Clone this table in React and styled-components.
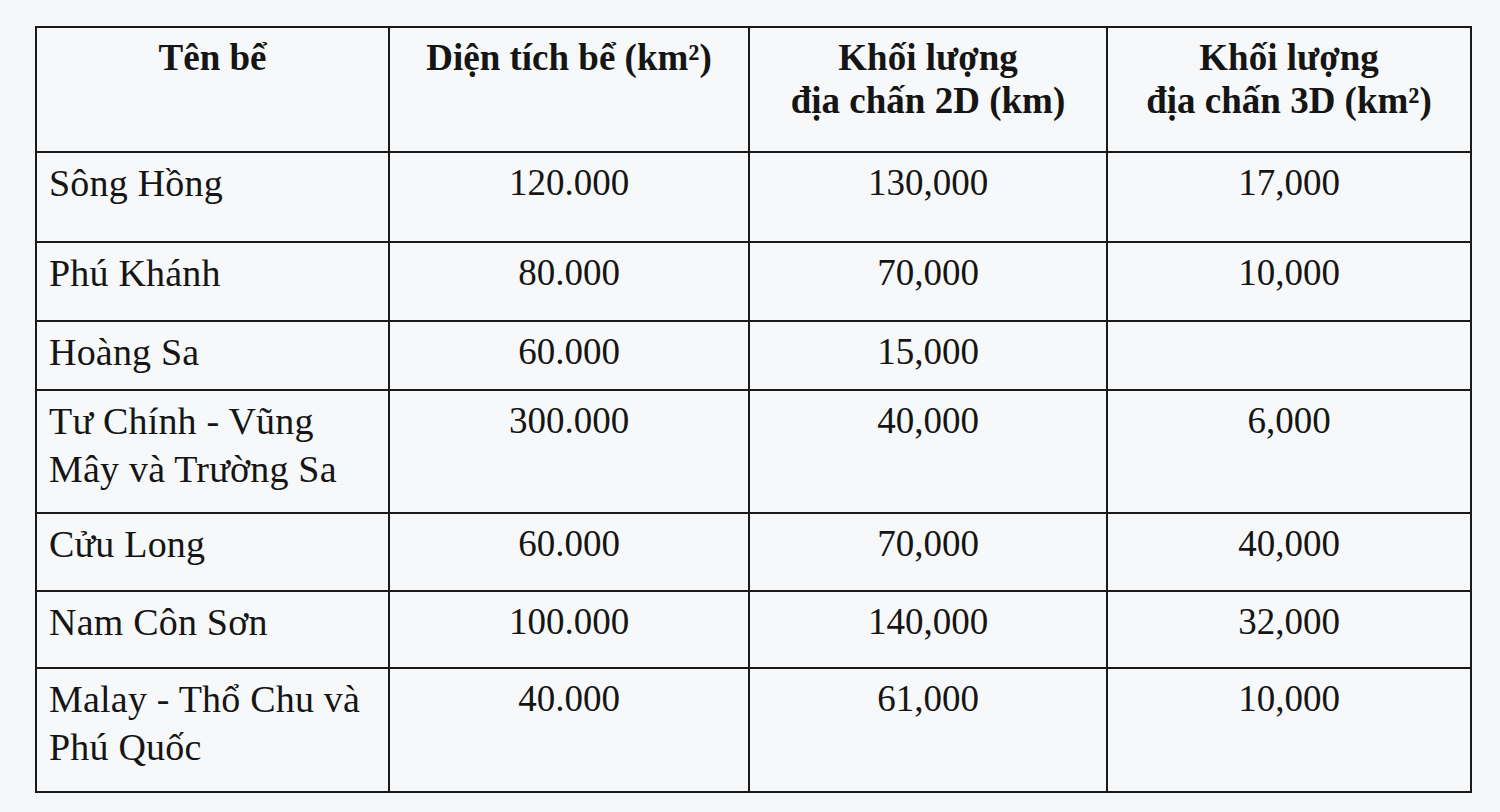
import React from "react";
import styled, { createGlobalStyle } from "styled-components";

const Global = createGlobalStyle`
  html, body {
    margin: 0;
    padding: 0;
    background: #f4f6f7;
  }
  body {
    width: 1500px;
    height: 812px;
    overflow: hidden;
  }
`;

const Page = styled.div`
  padding: 26px 30px 0 35px;
`;

const Table = styled.table`
  border-collapse: collapse;
  width: 1435px;
  table-layout: fixed;
  font-family: "Liberation Serif", "Times New Roman", serif;
  color: #151515;
  background: #f6f8f9;
  border: 2px solid #1a1a1a;
`;

const Col = styled.col`
  width: ${(p) => p.$w}px;
`;

const Row = styled.tr`
  height: ${(p) => p.$h}px;
`;

const Head = styled.th`
  border: 2px solid #1a1a1a;
  font-weight: 700;
  font-size: 37px;
  line-height: 43px;
  text-align: center;
  vertical-align: top;
  padding: 8px 8px 0;
`;

const Cell = styled.td`
  border: 2px solid #1a1a1a;
  font-size: ${(p) => (p.$num ? 37 : 38)}px;
  line-height: 48px;
  text-align: ${(p) => (p.$left ? "left" : "center")};
  vertical-align: top;
  padding: 6px ${(p) => (p.$left ? "10px 0 12px" : "8px 0")};
  letter-spacing: ${(p) => (p.$left ? "0.2px" : "0")};
`;

const rows = [
  { name: "Sông Hồng", a: "120.000", b: "130,000", c: "17,000", h: 90 },
  { name: "Phú Khánh", a: "80.000", b: "70,000", c: "10,000", h: 79 },
  { name: "Hoàng Sa", a: "60.000", b: "15,000", c: "", h: 69 },
  { name: ["Tư Chính - Vũng", "Mây và Trường Sa"], a: "300.000", b: "40,000", c: "6,000", h: 123 },
  { name: "Cửu Long", a: "60.000", b: "70,000", c: "40,000", h: 78 },
  { name: "Nam Côn Sơn", a: "100.000", b: "140,000", c: "32,000", h: 77 },
  { name: ["Malay - Thổ Chu và", "Phú Quốc"], a: "40.000", b: "61,000", c: "10,000", h: 124 },
];

const Lines = ({ value }) =>
  Array.isArray(value)
    ? value.map((line, i) => (
        <React.Fragment key={i}>
          {i > 0 && <br />}
          {line}
        </React.Fragment>
      ))
    : value;

export default function App() {
  return (
    <>
      <Global />
      <Page>
        <Table>
          <colgroup>
            <Col $w={353} />
            <Col $w={360} />
            <Col $w={358} />
            <Col $w={364} />
          </colgroup>
          <thead>
            <Row $h={125}>
              <Head>Tên bể</Head>
              <Head>Diện tích bể (km²)</Head>
              <Head>
                Khối lượng
                <br />
                địa chấn 2D (km)
              </Head>
              <Head>
                Khối lượng
                <br />
                địa chấn 3D (km²)
              </Head>
            </Row>
          </thead>
          <tbody>
            {rows.map((r, i) => (
              <Row key={i} $h={r.h}>
                <Cell $left>
                  <Lines value={r.name} />
                </Cell>
                <Cell $num>{r.a}</Cell>
                <Cell $num>{r.b}</Cell>
                <Cell $num>{r.c}</Cell>
              </Row>
            ))}
          </tbody>
        </Table>
      </Page>
    </>
  );
}
